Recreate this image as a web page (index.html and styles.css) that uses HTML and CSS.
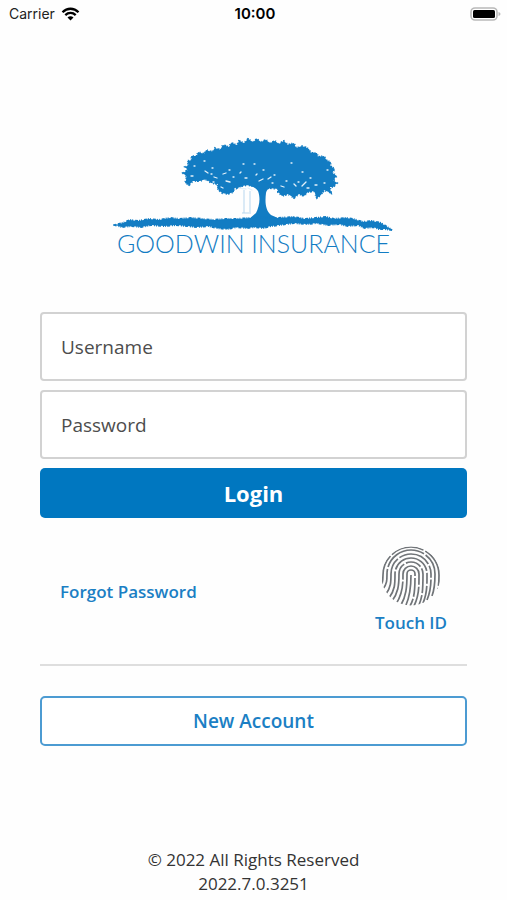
FILE: index.html
```html
<!DOCTYPE html>
<html lang="en">
<head>
    <meta charset="UTF-8">
    <meta name="viewport" content="width=device-width, initial-scale=1.0">
    <title>Goodwin Insurance</title>
    <link rel="stylesheet" href="styles.css">
</head>
<body>
    <header class="status-bar">
        <div class="carrier">
            <span>Carrier</span>
            <svg class="wifi" viewBox="0 0 18 14" aria-hidden="true">
                <path d="M1 5.2C5.6.6 12.4.6 17 5.2M3.8 8.1c3-2.9 7.4-2.9 10.4 0" fill="none" stroke="#000" stroke-width="2.3"/>
                <path d="M6 10.5c1.8-1.6 4.2-1.6 6 0L9 13.6z"/>
            </svg>
        </div>
        <div class="time">10:00</div>
        <div class="battery-wrap">
            <svg class="battery" viewBox="0 0 31 14" aria-hidden="true">
                <rect x="1" y="1" width="26" height="12" rx="4" fill="#fff" stroke="#b9b9b9" stroke-width="1.6"/>
                <rect x="3" y="3" width="22" height="8" rx="1.5"/>
                <path d="M28.5 5v4q2-.6 2-2t-2-2z" fill="#b9b9b9"/>
            </svg>
        </div>
    </header>

    <main class="login-page">
        <div class="logo">
            <svg class="tree" viewBox="112 136 282 96" aria-hidden="true">
                <!-- leaves -->
                <path class="leaves" d="M182 173L187 170 184 167 188 165 186 161 191 160 190 156 196 156 197 152 203 154 205 150 211 152 214 148 219 150 222 145 228 147 230 143 236 145 238 141 243 143 247 139 252 142 256 139 260 142 265 140 269 143 274 141 278 144 283 141 287 145 293 143 295 148 301 146 308 149 310 153 316 153 317 157 323 156 326 161 330 162 329 166 334 169 331 173 336 176 332 180 336 183 332 187 329 187 330 193 323 190 320 195 316 198 313 191 307 192 303 196 298 194 293 198 287 194 281 196 277 192 277 189 268 188 262 190 256 187 247 185 241 186 236 189 233 187 233 192 226 194 221 193 216 188 217 184 210 183 205 179 199 181 192 181 188 185 184 183 186 177z"/>
                <!-- trunk and branch -->
                <path class="fill" d="M232 187c12-4 21-2 25 4 3 8 1 16-2 22l-7 6h31l-9-4c-6-5-6-14-5-22 1-4 4-6 10-7l-16-5-16 2c-4-1-8 1-11 4z"/>
                <!-- gaps in the leaves -->
                <path class="gaps" d="M193 166h1M203 161h1M190 176l2 0M204 171l3 2M211 168h1M213 177l3 1M222 174l3-1M210 174h1M225 181l4 1M232 177h1M228 170h1M242 164h1M239 173l1-1M244 178h2M255 175l1-1M262 170h1M258 181l4-2M253 164h1M267 179l3-2M271 183h1M273 175h1M290 163h1M301 172h1M301 186l4-4M293 184l2 2M285 181h1M309 178h1M314 185h2M323 183h1M326 170h1M297 182h1M280 186l3 1M238 188l7 1M247 188l4 2M212 182h1M306 188h2M220 187l2 1"/>
                <!-- swing -->
                <path class="swing" d="M243 190v23M249 191v21M241 213h9"/>
                <!-- ground -->
                <path class="ground" d="M114 225L122 223 129 220 137 221 148 219 158 220 169 218 178 219 190 218 201 219 213 220 224 219 236 219 250 218 262 217 276 218 293 217 304 219 325 217 333 219 345 218 352 219 362 222 371 221 380 223 386 227 391 230 384 229 378 229 372 227 364 228 357 225 347 226 338 224 327 225 316 223 305 224 293 223 278 225 270 226 262 228 254 227 246 228 236 227 226 229 216 228 208 226 196 227 186 226 175 225 163 226 150 225 140 227 130 226 121 227z"/>
            </svg>
            <div class="logo-text">GOODWIN INSURANCE</div>
        </div>

        <form class="login-form">
            <input class="field" type="text" placeholder="Username" aria-label="Username">
            <input class="field" type="password" placeholder="Password" aria-label="Password">
            <button class="login-btn" type="button">Login</button>
        </form>

        <div class="options">
            <a class="link" href="#">Forgot Password</a>
            <button class="touch-btn" type="button">
                <svg class="fingerprint" viewBox="0 0 60 60" aria-hidden="true">
                    <clipPath id="round"><circle cx="30" cy="30" r="29.6"/></clipPath>
                    <g clip-path="url(#round)">
                        <path stroke-dasharray="30 2 34 2 40 2" d="M1 38c1-3 1-6 1-9a28 28 0 0 1 56 0c0 5 0 8-1 14"/>
                        <path stroke-dasharray="21 2 44 2 60" d="M2 43c4-5 4-9 4-15a24 24 0 0 1 48 0c0 8 0 14-3 22"/>
                        <path stroke-dasharray="38 2 33 2 12 2" d="M5 48c5-7 5-12 5-20a20 20 0 0 1 40 0c0 10 0 17-4 26"/>
                        <path stroke-dasharray="28 2 42 2 11 2" d="M8 52c6-8 6-14 6-24a16 16 0 0 1 32 0c0 12 0 20-4 29"/>
                        <path stroke-dasharray="40 2 16 2 25 2" d="M11 55c6-8 7-15 7-27a12 12 0 0 1 24 0c0 13 0 21-4 31"/>
                        <path stroke-dasharray="24 2 41 2 20" d="M15 58c6-9 7-16 7-30a8 8 0 0 1 16 0c0 14 0 22-5 32"/>
                        <path stroke-dasharray="46 2 19 2 20" d="M20 59c5-9 6-17 6-31a4 4 0 0 1 8 0c0 14 0 23-5 32"/>
                        <path d="M30 29c0 13-1 21-5 30"/>
                    </g>
                </svg>
                <span>Touch ID</span>
            </button>
        </div>

        <hr class="divider">

        <button class="account-btn" type="button">New Account</button>
    </main>

    <footer class="footer">
        <div>© 2022 All Rights Reserved</div>
        <div>2022.7.0.3251</div>
    </footer>
</body>
</html>
```

FILE: styles.css
```css
* {
    box-sizing: border-box;
}

body {
    font-family: 'Open Sans', sans-serif;
    background-color: #fefefe;
    color: #333;
    margin: 0;
    min-height: 100vh;
    display: flex;
    flex-direction: column;
}

.status-bar {
    display: grid;
    grid-template-columns: 1fr auto 1fr;
    align-items: center;
    height: 27px;
    padding: 0 6px 0 9px;
    font-family: Inter, sans-serif;
    font-size: 14px;
    color: #222;
}

.carrier {
    display: flex;
    align-items: center;
    gap: 6px;
}

.wifi {
    width: 19px;
    height: 14px;
}

.time {
    font-size: 15px;
    font-weight: 600;
    color: #000;
}

.battery-wrap {
    display: flex;
    justify-content: flex-end;
}

.battery {
    width: 31px;
    height: 14px;
}

.login-page {
    flex: 1;
    padding: 109px 40px 0;
}

.logo {
    display: flex;
    flex-direction: column;
    align-items: center;
    height: 176px;
}

.tree {
    width: 282px;
    height: 96px;
}

.leaves {
    fill: #127cc3;
    stroke: #127cc3;
    stroke-width: 2;
    stroke-dasharray: 1 2 2 1 1 3;
}

.fill {
    fill: #127cc3;
}

.gaps {
    stroke: #e3f0f9;
    stroke-width: 1.3;
    stroke-linecap: round;
}

.swing {
    fill: none;
    stroke: #b7d6ee;
    stroke-width: 1;
}

.ground {
    fill: #127cc3;
    stroke: #127cc3;
    stroke-width: 2;
    stroke-dasharray: 1 2 3 1 1 1;
}

.logo-text {
    font-family: Lato, sans-serif;
    font-size: 25px;
    font-weight: 300;
    line-height: 22px;
    color: #127cc3;
    white-space: nowrap;
}

.login-form {
    display: flex;
    flex-direction: column;
    gap: 9px;
}

.field {
    width: 100%;
    height: 69px;
    padding: 0 19px;
    border: 2px solid #d2d2d2;
    border-radius: 4px;
    background-color: #fff;
    font-family: inherit;
    font-size: 19px;
    color: #4d4d4d;
}

.field::placeholder {
    color: #4d4d4d;
    opacity: 1;
}

.login-btn {
    height: 50px;
    border: none;
    border-radius: 5px;
    background-color: #0077c0;
    color: #fff;
    font-family: inherit;
    font-size: 22px;
    font-weight: 700;
    cursor: pointer;
}

.options {
    display: flex;
    justify-content: space-between;
    align-items: center;
    padding: 28px 20px;
}

.link {
    color: #1b7fc4;
    font-size: 17px;
    font-weight: 600;
    text-decoration: none;
}

.touch-btn {
    display: flex;
    flex-direction: column;
    align-items: center;
    gap: 4px;
    padding: 0;
    border: none;
    background: none;
    color: #1b7fc4;
    font-family: inherit;
    font-size: 17px;
    font-weight: 600;
    line-height: 26px;
    cursor: pointer;
}

.fingerprint {
    width: 60px;
    height: 60px;
    fill: none;
    stroke: #707478;
    stroke-width: 1.7;
}

.divider {
    margin: 0 0 30px;
    border: none;
    border-top: 2px solid #dedede;
}

.account-btn {
    width: 100%;
    height: 50px;
    border: 2px solid #4c9bd2;
    border-radius: 5px;
    background-color: #fff;
    color: #1b7fc4;
    font-family: inherit;
    font-size: 19px;
    font-weight: 600;
    cursor: pointer;
}

.footer {
    padding-bottom: 4px;
    text-align: center;
    font-size: 17px;
    line-height: 24px;
}
```
